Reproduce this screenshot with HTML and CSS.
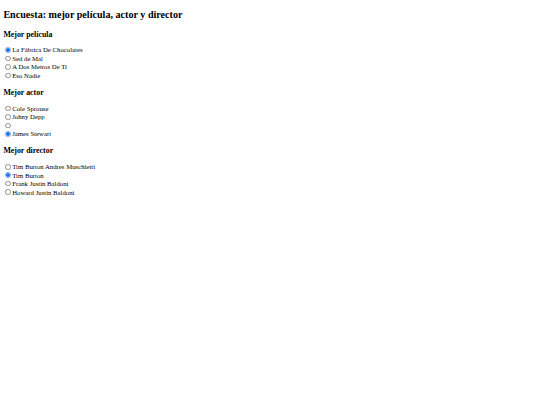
FILE: index.html
```html
<!DOCTYPE html>
<html lang="es">
<head>
<meta charset="utf-8">
<title>Encuesta</title>
<link rel="stylesheet" href="styles.css">
</head>
<body class="page">
<h2 class="title">Encuesta: mejor película, actor y director</h2>
<form class="survey">
  <h3 class="question">Mejor película</h3>
  <input class="option" type="radio" name="pelicula" id="p1" checked><label for="p1">La Fábrica De Chocolates</label><br>
  <input class="option" type="radio" name="pelicula" id="p2"><label for="p2">Sed de Mal</label><br>
  <input class="option" type="radio" name="pelicula" id="p3"><label for="p3">A Dos Metros De Ti</label><br>
  <input class="option" type="radio" name="pelicula" id="p4"><label for="p4">Eso Nadie</label><br>

  <h3 class="question">Mejor actor</h3>
  <input class="option" type="radio" name="actor" id="a1"><label for="a1">Cole Sprouse</label><br>
  <input class="option" type="radio" name="actor" id="a2"><label for="a2">Johny Depp</label><br>
  <input class="option" type="radio" name="actor" id="a3"><label for="a3"></label><br>
  <input class="option" type="radio" name="actor" id="a4" checked><label for="a4">James Stewart</label><br>

  <h3 class="question">Mejor director</h3>
  <input class="option" type="radio" name="director" id="d1"><label for="d1">Tim Burton Andres Muschietti</label><br>
  <input class="option" type="radio" name="director" id="d2" checked><label for="d2">Tim Burton</label><br>
  <input class="option" type="radio" name="director" id="d3"><label for="d3">Frank Justin Baldoni</label><br>
  <input class="option" type="radio" name="director" id="d4"><label for="d4">Howard Justin Baldoni</label><br>
</form>
</body>
</html>
```

FILE: styles.css
```css
html {
  background: #ffffff;
}

.page {
  margin: 3.375px;
  font-family: "Liberation Serif", "Times New Roman", serif;
  font-size: 6.75px;
  color: #000000;
}

.title {
  font-size: 10.125px;
  font-weight: bold;
  line-height: normal;
  margin: 5.4px 0 9.8px;
}

.survey {
  margin: 0;
  line-height: 8.45px;
}

.question {
  font-size: 1.17em;
  font-weight: bold;
  line-height: normal;
  margin: 7.7px 0 7.9px;
}

.option {
  -webkit-appearance: none;
  appearance: none;
  box-sizing: border-box;
  width: 5.5px;
  height: 5.5px;
  margin: 0 1.27px 0 2.1px;
  border: 0.6px solid #8f8f8f;
  border-radius: 50%;
  background: #ffffff;
  vertical-align: -0.3px;
}

.option:checked {
  border-color: #7aa7ea;
  background: radial-gradient(circle, #1a73e8 0, #1a73e8 45%, #5f9eee 70%, #ffffff 72%);
}
```
